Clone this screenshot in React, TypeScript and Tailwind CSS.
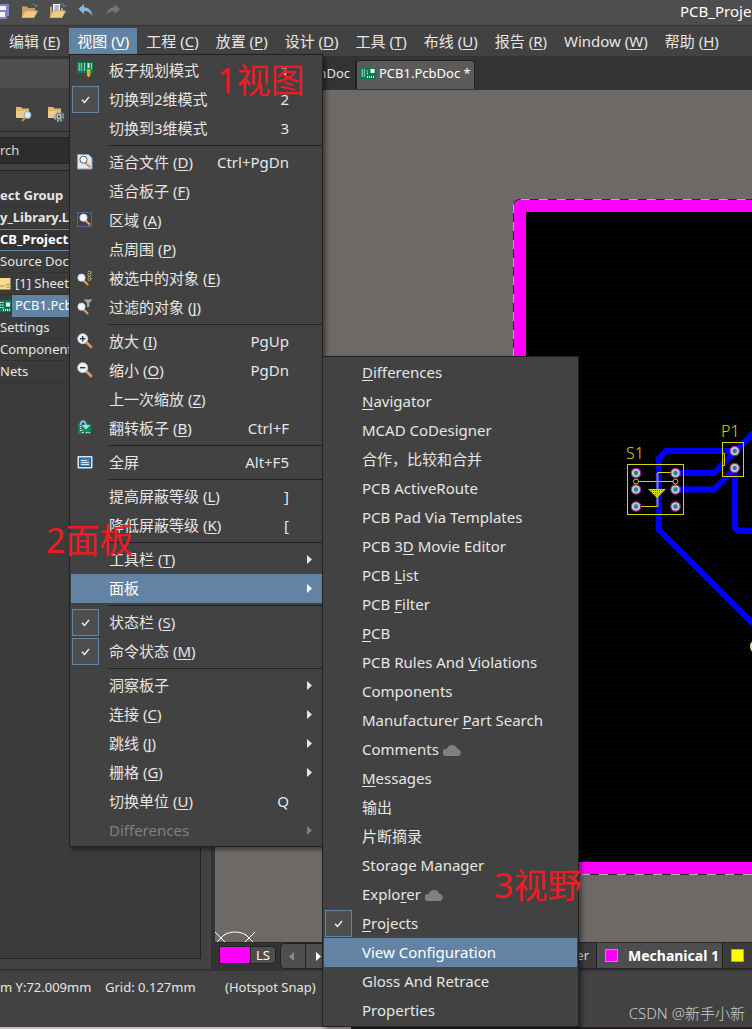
import { Fragment, type ReactNode } from 'react';

interface Entry {
  label: string;
  hotkey?: string;
  shortcut?: string;
  icon?: ReactNode;
  checked?: boolean;
  active?: boolean;
  disabled?: boolean;
  submenu?: boolean;
  cloud?: boolean;
}

function Lens({ sign }: { sign?: 'plus' | 'minus' }) {
  return (
    <svg width="16" height="16" viewBox="0 0 16 16">
      <path d="M9.500 9.500l4.500 4.500" stroke="#c98a45" strokeWidth="3" strokeLinecap="round" />
      <path d="M9.500 9l4.500 4.500" stroke="#f2c98c" strokeWidth="1" />
      <circle cx="5.700" cy="5.700" r="5" fill="#e9f3fb" stroke="#b4c8dc" />
      {sign && <path d="M3 5.700h5.400" stroke="#34383c" strokeWidth="1.400" />}
      {sign === 'plus' && <path d="M5.700 3v5.400" stroke="#34383c" strokeWidth="1.400" />}
    </svg>
  );
}

function SmallLens({ kind }: { kind: 'page' | 'area' | 'selected' | 'filter' }) {
  const low = kind === 'selected' || kind === 'filter';
  return (
    <svg width="16" height="16" viewBox="0 0 16 16">
      {kind === 'page' && <path d="M.5.5h11l3.500 3.500v11H.5z" fill="#dfe7f5" stroke="#8d9fc4" />}
      {kind === 'area' && (
        <rect x=".5" y=".5" width="14" height="14" fill="none" stroke="#6670c0" strokeDasharray="2 1" />
      )}
      {kind === 'selected' && (
        <g fill="none" stroke="#e8e27a">
          <circle cx="12.500" cy="2.500" r="1.500" strokeDasharray="1.500 .8" />
          <circle cx="12.500" cy="9" r="1.500" strokeDasharray="1.500 .8" />
          <path d="M10.500 5l2 1.500L14.500 5" />
        </g>
      )}
      {kind === 'filter' && <path d="M6.500.5h9l-3.300 3.500v4h-2.200v-4z" fill="#a9a9a9" />}
      <g transform={low ? 'translate(-2 2)' : undefined}>
        <path d="M8.500 8.500l4 4" stroke="#c98a45" strokeWidth="2.400" strokeLinecap="round" />
        <path d="M8.800 8.300l3.700 3.700" stroke="#f2c98c" />
        <circle cx="6.500" cy="5.700" r="3.600" fill="#f1f7fc" stroke={kind === 'page' ? '#55606c' : '#c6d6e4'} />
      </g>
    </svg>
  );
}

function BoardIcon({ pencil, flip }: { pencil?: boolean; flip?: boolean }) {
  return (
    <svg width="16" height="16" viewBox="0 0 16 16">
      {flip ? (
        <>
          <rect x="1" y="4" width="13" height="10" fill="#0b8a57" />
          <path d="M3 6.500h2M3 8.500h2M3 10.500h3M9 12.500h4M5 12.500h2" stroke="#e9f5ee" strokeDasharray="1 .5" />
          <path d="M3.500 5C3.500.5 8.500-.5 8.800 5" fill="none" stroke="#8db9e8" strokeWidth="2" />
          <path d="M4.800 5h8.400L9 9.800z" fill="#b5d4f5" />
        </>
      ) : (
        <g transform={pencil ? 'translate(0 -2)' : undefined}>
          <rect x="0" y="2" width="16" height="11" fill="#0b7a50" />
          <path d="M1.500 4h4M1.500 6h4M1.500 8h4M1.500 10h4" stroke="#e9f5ee" strokeDasharray="1.500 .7" />
          {pencil ? (
            <>
              <path d="M7.500 3v8M14.500 3v6" stroke="#9fdcc0" />
              <path d="M11.500 3v5" stroke="#d9f3e6" strokeWidth="2" />
              <path d="M10 9h3.500v6l-1.800 2.500-1.700-2z" fill="#e3a92c" />
            </>
          ) : (
            <>
              <rect x="10.500" y="3" width="4" height="4" fill="#f4fbf7" />
              <path d="M7.500 4v5" stroke="#5cc795" />
              <path d="M7 11h8" stroke="#e9f5ee" strokeWidth="2" strokeDasharray="1 1" />
            </>
          )}
        </g>
      )}
    </svg>
  );
}

function ScreenIcon() {
  return (
    <svg width="16" height="16" viewBox="0 0 16 16">
      <rect x=".5" y="2" width="15" height="12.500" rx="1" fill="#dfe6ee" />
      <rect x="2.500" y="4" width="11" height="8.500" fill="#3583c8" stroke="#1c5a94" />
      <path d="M4 6.500h6M4 8.500h8M4 10.500h8" stroke="#d6e9fa" />
    </svg>
  );
}

function FolderIcon({ badge }: { badge?: 'lens' | 'gear' | 'open' | 'page' }) {
  const open = badge === 'open' || badge === 'page';
  return (
    <svg width="18" height="18" viewBox="0 0 18 18">
      {open ? (
        <>
          <path d="M1 15V4.500h5l1 1.500h7V9" fill="#c99f60" />
          {badge === 'page' && (
            <g>
              <path d="M3.500 1.500h8V11h-8z" fill="#f4f6fa" stroke="#44546c" />
              <path d="M5.500 4h4.500M5.500 6h4.500M5.500 8h4" stroke="#5f7592" />
            </g>
          )}
          <path d="M1 15.500L4 9h12.500l-3.500 6.500z" fill="#f1ca85" stroke="#d9ad68" />
          <path d="M11 3c1.500-2 3.500-1.500 4 1M13.500 3.500l1.500 1.500 1.500-2" fill="none" stroke="#5f86b0" />
        </>
      ) : (
        <>
          <path d="M1 14V3h5l1.500 1.500H14V14z" fill="#e3b877" />
          <path d="M1 7h13v7H1z" fill="#f0ca8d" />
        </>
      )}
      {badge === 'lens' && (
        <g>
          <path d="M10 14l-3 3" stroke="#c98a45" strokeWidth="2" />
          <circle cx="12.500" cy="11" r="3.500" fill="#d5e9f5" stroke="#8fa9ba" />
        </g>
      )}
      {badge === 'gear' && (
        <g fill="none" stroke="#a9afb3">
          <circle cx="12" cy="12.500" r="4.500" strokeWidth="1.600" strokeDasharray="2 1.500" />
          <circle cx="12" cy="12.500" r="3" fill="#d9dcde" stroke="#7d8488" strokeWidth="1.600" />
          <circle cx="12" cy="12.500" r="1.200" fill="#444" stroke="none" />
        </g>
      )}
    </svg>
  );
}

function CurvedArrow({ redo }: { redo?: boolean }) {
  return (
    <svg width="16" height="16" viewBox="0 0 16 16">
      <path
        d={redo ? 'M15 6L9.500 1v3.300C5 4.500 2 7 1.500 12 3.500 9 6 8 9.500 8v3.200z' : 'M.5 6L6 1v3.300c5 .2 8 3.200 8.500 9.200C12.500 9.500 10 8 6 8v3.200z'}
        fill={redo ? '#747474' : '#8ab4e6'}
      />
    </svg>
  );
}

function Cloud() {
  return (
    <svg width="18" height="12" viewBox="0 0 18 12" className="ml-1">
      <path d="M3 12A3.200 3.200 0 0 1 3 5Q4 5 4.300 4.300A5.200 5.200 0 0 1 14 4.300Q14.300 5 15 5A3.600 3.600 0 0 1 15 12z" fill="#808080" />
    </svg>
  );
}

const MENU_BAR: [string, string][] = [
  ['编辑', 'E'],
  ['视图', 'V'],
  ['工程', 'C'],
  ['放置', 'P'],
  ['设计', 'D'],
  ['工具', 'T'],
  ['布线', 'U'],
  ['报告', 'R'],
  ['Window', 'W'],
  ['帮助', 'H'],
];

// each inner list is one block between separators
const VIEW_MENU: Entry[][] = [
  [
    { label: '板子规划模式', shortcut: '1', icon: <BoardIcon pencil /> },
    { label: '切换到2维模式', shortcut: '2', checked: true },
    { label: '切换到3维模式', shortcut: '3' },
  ],
  [
    { label: '适合文件', hotkey: 'D', shortcut: 'Ctrl+PgDn', icon: <SmallLens kind="page" /> },
    { label: '适合板子', hotkey: 'F' },
    { label: '区域', hotkey: 'A', icon: <SmallLens kind="area" /> },
    { label: '点周围', hotkey: 'P' },
    { label: '被选中的对象', hotkey: 'E', icon: <SmallLens kind="selected" /> },
    { label: '过滤的对象', hotkey: 'J', icon: <SmallLens kind="filter" /> },
  ],
  [
    { label: '放大', hotkey: 'I', shortcut: 'PgUp', icon: <Lens sign="plus" /> },
    { label: '缩小', hotkey: 'O', shortcut: 'PgDn', icon: <Lens sign="minus" /> },
    { label: '上一次缩放', hotkey: 'Z' },
    { label: '翻转板子', hotkey: 'B', shortcut: 'Ctrl+F', icon: <BoardIcon flip /> },
  ],
  [{ label: '全屏', shortcut: 'Alt+F5', icon: <ScreenIcon /> }],
  [
    { label: '提高屏蔽等级', hotkey: 'L', shortcut: ']' },
    { label: '降低屏蔽等级', hotkey: 'K', shortcut: '[' },
  ],
  [
    { label: '工具栏', hotkey: 'T', submenu: true },
    { label: '面板', submenu: true, active: true },
  ],
  [
    { label: '状态栏', hotkey: 'S', checked: true },
    { label: '命令状态', hotkey: 'M', checked: true },
  ],
  [
    { label: '洞察板子', submenu: true },
    { label: '连接', hotkey: 'C', submenu: true },
    { label: '跳线', hotkey: 'J', submenu: true },
    { label: '栅格', hotkey: 'G', submenu: true },
    { label: '切换单位', hotkey: 'U', shortcut: 'Q' },
    { label: 'Differences', submenu: true, disabled: true },
  ],
];

// an underscore stands before the underlined letter
const PANEL_MENU: Entry[][] = [
  [
    { label: '_Differences' },
    { label: '_Navigator' },
    { label: 'MCAD CoDesigner' },
    { label: '合作，比较和合并' },
    { label: 'PCB ActiveRoute' },
    { label: 'PCB Pad Via Templates' },
    { label: 'PCB 3_D Movie Editor' },
    { label: 'PCB _List' },
    { label: 'PCB _Filter' },
    { label: '_PCB' },
    { label: 'PCB Rules And _Violations' },
    { label: 'Components' },
    { label: 'Manufacturer _Part Search' },
    { label: 'Comments', cloud: true },
    { label: '_Messages' },
    { label: '输出' },
    { label: '片断摘录' },
    { label: 'Storage Manager' },
    { label: 'Explo_rer', cloud: true },
    { label: '_Projects', checked: true },
    { label: 'View Configuration', active: true },
    { label: 'Gloss And Retrace' },
    { label: 'Properties' },
  ],
];

function Key({ children }: { children: ReactNode }) {
  return <u className="decoration-1 underline-offset-2">{children}</u>;
}

function Label({ text, hotkey }: { text: string; hotkey?: string }) {
  const at = text.indexOf('_');
  if (at >= 0) {
    return (
      <span>
        {text.slice(0, at)}
        <Key>{text[at + 1]}</Key>
        {text.slice(at + 2)}
      </span>
    );
  }
  return (
    <span>
      {text}
      {hotkey && <> (<Key>{hotkey}</Key>)</>}
    </span>
  );
}

function MenuRow({ entry }: { entry: Entry }) {
  const body = (
    <>
      <span className="mr-[9px] grid w-[29px] shrink-0 place-items-center">
        {entry.checked ? (
          <>
            <input
              type="checkbox"
              defaultChecked
              className="col-start-1 row-start-1 size-[27px] appearance-none border border-[#6283a3] bg-[#4e4e4e]"
            />
            <svg width="9" height="8" viewBox="0 0 9 8" className="pointer-events-none col-start-1 row-start-1">
              <path d="M1 3.800l2.500 2.700L8 1" fill="none" stroke="#f2f2f2" strokeWidth="1.400" />
            </svg>
          </>
        ) : (
          <span className="pr-[2px] pb-[2px]">{entry.icon}</span>
        )}
      </span>
      <Label text={entry.label} hotkey={entry.hotkey} />
      {entry.cloud && <Cloud />}
      <span className="ml-auto">{entry.shortcut}</span>
      <span className="flex w-[33px] shrink-0 justify-end pr-[10px]">
        {entry.submenu && (
          <svg width="5" height="9" viewBox="0 0 5 9">
            <path d="M0 0l5 4.500L0 9z" fill="currentColor" />
          </svg>
        )}
      </span>
    </>
  );
  if (entry.checked) {
    return <label className="flex h-[29px] w-full items-center">{body}</label>;
  }
  return (
    <button
      type="button"
      disabled={entry.disabled}
      className={`flex h-[29px] w-full items-center text-left ${entry.active ? 'bg-[#6283a3] text-white' : ''} ${
        entry.disabled ? 'text-[#808080]' : ''
      }`}
    >
      {body}
    </button>
  );
}

function Menu({ groups, className }: { groups: Entry[][]; className: string }) {
  return (
    <div
      className={`absolute border border-[#222222] bg-[#424242] py-px pl-px text-[15px] whitespace-nowrap shadow-[3px_3px_4px_rgba(0,0,0,0.4)] ${className}`}
    >
      {groups.map((group, i) => (
        <Fragment key={i}>
          {i > 0 && <hr className="my-[2px] ml-[38px] border-[#222222]" />}
          {group.map((entry) => (
            <MenuRow key={entry.label} entry={entry} />
          ))}
        </Fragment>
      ))}
    </div>
  );
}

function ProjectsPanel() {
  const row = 'flex h-[22px] w-full items-center border-b border-[#333333] text-left';
  return (
    <aside className="flex w-[211px] shrink-0 flex-col border-t-[3px] border-[#333333] bg-[#424242] text-[13px]">
      <div className="h-[29px] bg-[#4e4e4e]" />
      <div className="flex h-[43px] items-center gap-[14px] pt-[7px] pl-[15px]">
        <button type="button" aria-label="Find in project"><FolderIcon badge="lens" /></button>
        <button type="button" aria-label="Project options"><FolderIcon badge="gear" /></button>
      </div>
      <div className="border-t border-[#262626] pt-[5px]">
        <input
          type="text"
          aria-label="Search"
          defaultValue="rch"
          className="block h-[27px] w-full border-y border-[#262626] bg-[#2d2d2d] pb-px text-[#d8d8d8] outline-none"
        />
      </div>
      <div className="mt-[6px] mr-[10px] mb-[10px] flex-1 overflow-hidden border-t border-r border-b border-[#222222] bg-[#3b3b3b] pt-[14px] whitespace-nowrap">
        <button type="button" className={`${row} font-bold`}>ect Group</button>
        <button type="button" className={`${row} font-bold`}>y_Library.L</button>
        <button type="button" className="flex h-[22px] w-full items-center border-y border-[#6283a3] bg-[#333333] text-left font-bold text-white">
          CB_Project.
        </button>
        <button type="button" className={row}>Source Doc</button>
        <button type="button" className={row}>
          <svg width="11" height="12" viewBox="0 0 11 12" className="mr-[4px]">
            <path d="M0 0h10.500v11.500H0z" fill="#f4dc8e" />
            <path d="M0 8h5M6 6.500h4M6 9h4" stroke="#a98f4a" />
          </svg>
          [1] Sheet
        </button>
        <button type="button" className="flex h-[22px] w-full items-center text-left">
          <svg width="12" height="12" viewBox="0 0 12 12">
            <path d="M0 0h11v12H0z" fill="#0b7a50" />
            <path d="M0 2.500h4M0 5h4M0 7.500h4" stroke="#e9f5ee" strokeDasharray="1.500 .7" />
            <path d="M6 2.500h4v4H6z" fill="#f4fbf7" />
            <path d="M3 10h7" stroke="#e9f5ee" strokeWidth="2" strokeDasharray="1 1" />
          </svg>
          <span className="flex h-full flex-1 items-center bg-[#6283a3] pl-[3px] text-white">PCB1.Pcb</span>
        </button>
        <button type="button" className={row}>Settings</button>
        <button type="button" className={row}>Component</button>
        <button type="button" className={row}>Nets</button>
      </div>
    </aside>
  );
}

const PADS = [
  [636, 473],
  [636, 489.5],
  [636, 506.5],
  [675.5, 473],
  [675.5, 489.5],
  [675.5, 506.5],
  [734.7, 451],
  [734.7, 468],
];

function BoardView() {
  return (
    <svg className="absolute inset-0 h-full w-full" aria-label="PCB layout">
      <defs>
        <pattern id="grid" width="4" height="4" patternUnits="userSpaceOnUse">
          <rect width="4" height="4" fill="#000000" />
          <rect width="1" height="1" fill="#121212" />
        </pattern>
      </defs>
      {/* shapes are in window coordinates */}
      <g transform="translate(-215 -90)" fill="none">
        <path d="M1400 874H514V206q0-6 6-6h880z" fill="#ff00ff" />
        <rect x="526" y="212" width="900" height="650" fill="url(#grid)" />
        <path d="M1400 874.500H513.500V206q0-6.500 6.500-6.500h880" stroke="#3c1c3c" />
        <path d="M1400 874.500H513.500V206q0-6.500 6.500-6.500h880" stroke="#b0aeac" strokeDasharray="9 9" />

        <g stroke="#0000ff" strokeWidth="6" strokeLinejoin="round">
          <path d="M734.700 451H666l-7.300 7.500V529.500L1000 870" />
          <path d="M675.500 473H714L800 386" />
          <path d="M675.500 489.500H714l20.700-21v58.500l4 3.700H1400" />
        </g>

        <g stroke="#d6d600">
          <rect x="627.500" y="464.500" width="56" height="50" />
          <rect x="722.500" y="442.500" width="21" height="34" />
          <path d="M722.500 453.500h2v12h-2" />
          <path d="M636 481.500h39.500M657.500 472.500h14M641 506.500h16" />
        </g>
        <circle cx="758" cy="646.500" r="7" stroke="#e6e68c" strokeWidth="2" />
        <path d="M657.500 473v34" stroke="#8c8c78" strokeWidth="2" />
        <path d="M648 489h18l-9 9z" fill="#d6d600" />
        <path d="M651 490.500h12M653 492.500h8M655 494.500h4" stroke="#6a6a10" strokeDasharray="1 1" />

        {PADS.map(([x, y]) => (
          <g key={`${x}-${y}`}>
            <circle cx={x} cy={y} r="4.700" fill="#c9c9c9" stroke="#a3219f" strokeWidth="1.200" />
            <circle cx={x} cy={y} r="2.200" fill="#009494" />
          </g>
        ))}
        <circle cx="636" cy="481.500" r="2.500" fill="#000000" stroke="#d6d600" />
        <circle cx="675.500" cy="481.500" r="2.500" fill="#000000" stroke="#d6d600" />

        <g fill="#d6d600" className="text-[16px] font-light">
          <text x="626" y="459">S1</text>
          <text x="721" y="437">P1</text>
        </g>

        <g stroke="#ffffff">
          <path d="M215 932l10 10M217 942l8-8M245 934l8 8M245 942l10-10" />
          <path d="M221 938c6-8 22-8 28 0" />
        </g>
      </g>
    </svg>
  );
}

function LayerBar() {
  return (
    <div className="flex h-[27px] shrink-0 items-stretch border-t border-[#262626] bg-[#333333] pl-[4px] text-[14px] font-bold text-white">
      <div className="mt-[3px] flex h-[18px] items-stretch rounded-r border border-[#222222]">
        <span className="w-[30px] bg-[#ff00ff]" />
        <button type="button" className="w-[25px] rounded-r border-l border-[#222222] bg-[#4e4e4e] text-[13px] leading-4 font-normal">
          LS
        </button>
      </div>
      <div className="ml-[4px] flex w-[61px] rounded-l border border-[#222222] bg-[#4e4e4e]">
        <button type="button" aria-label="Previous layers" className="flex w-[25px] items-center justify-center border-r border-[#222222] pr-[4px]">
          <svg width="5" height="9" viewBox="0 0 5 9"><path d="M5 0L0 4.500 5 9z" fill="#8c8c8c" /></svg>
        </button>
        <button type="button" aria-label="Next layers" className="flex w-[24px] items-center justify-center">
          <svg width="5" height="9" viewBox="0 0 5 9"><path d="M0 0l5 4.500L0 9z" fill="#ffffff" /></svg>
        </button>
      </div>
      <button type="button" className="w-[256px] shrink-0 border-r border-b border-[#222222] bg-[#3b3b3b] pr-[7px] text-right text-[13px] font-normal text-[#d8d8d8]">
        er
      </button>
      <button type="button" className="flex w-[125px] shrink-0 items-center border-b border-[#222222] bg-[#4e4e4e] pl-[8px] whitespace-nowrap">
        <span className="mr-[10px] size-[13px] border border-[#a0a0a0] bg-[#ff00ff]" />
        Mechanical 1
      </button>
      <button type="button" aria-label="Top Overlay" className="flex flex-1 items-center border-b border-l border-[#222222] bg-[#3b3b3b] pl-[8px]">
        <span className="size-[13px] border border-[#a0a0a0] bg-[#ffff00]" />
      </button>
    </div>
  );
}

export default function App() {
  return (
    <div className="relative flex min-h-screen w-full flex-col overflow-hidden bg-[#333333] font-['Noto_Sans','Noto_Sans_CJK_SC',sans-serif] text-[15px] text-[#e6e6e6]">
      {/* Title bar */}
      <header className="flex h-[26px] shrink-0 items-center border-b border-[#333333] bg-[#4e4e4e] pb-[2px] text-white">
        <div className="flex items-center pb-[2px]">
          <button type="button" aria-label="Save" className="mr-[12px]">
            <svg width="9" height="16" viewBox="0 0 9 16">
              <path d="M0 1h9v12H7v3H0z" fill="#8083c4" />
              <path d="M0 3h6v4H0zM0 9h5v5H0z" fill="#f2f3fb" />
            </svg>
          </button>
          <button type="button" aria-label="Open" className="mr-[10px]"><FolderIcon badge="open" /></button>
          <button type="button" aria-label="Open document" className="mr-[11px]"><FolderIcon badge="page" /></button>
          <button type="button" aria-label="Undo" className="mr-[11px]"><CurvedArrow /></button>
          <button type="button" aria-label="Redo"><CurvedArrow redo /></button>
        </div>
        <h1 className="ml-auto w-[72px] whitespace-nowrap">PCB_Proje</h1>
      </header>

      {/* Menu bar */}
      <nav className="flex h-[30px] shrink-0 items-center gap-px bg-[#424242] pl-px">
        {MENU_BAR.map(([name, key]) => (
          <button
            key={name}
            type="button"
            className={`h-[26px] px-[8px] whitespace-nowrap ${name === '视图' ? 'bg-[#6283a3] text-white' : ''}`}
          >
            <Label text={name} hotkey={key} />
          </button>
        ))}
      </nav>

      <main className="flex flex-1">
        <ProjectsPanel />
        <section className="ml-[4px] flex min-w-0 flex-1 flex-col">
          <div className="flex h-[34px] shrink-0 items-end text-[13px]">
            <button type="button" className="mb-px h-[29px] w-[141px] border-r border-[#222222] pr-[5px] pb-px text-right">
              nDoc
            </button>
            <button
              type="button"
              className="mb-px flex h-[29px] items-center gap-[3px] rounded-t border border-b-0 border-[#222222] bg-[#5a5a5a] px-[3px] pb-[2px] whitespace-nowrap text-white"
            >
              <BoardIcon />
              PCB1.PcbDoc *
            </button>
          </div>
          <div className="relative flex-1 overflow-hidden bg-[#6d6966]">
            <BoardView />
          </div>
          <LayerBar />
        </section>
      </main>

      {/* Status bar */}
      <footer className="mt-[2px] shrink-0 bg-[#424242] text-[13px]">
        <div className="flex h-[56px] items-start pt-[7px] whitespace-nowrap">
          <span className="w-[105px]">m Y:72.009mm</span>
          <span className="w-[120px]">Grid: 0.127mm</span>
          <span>(Hotspot Snap)</span>
          <span className="mt-[24px] mr-[7px] ml-auto text-[15px] font-light text-[#cccccc]">CSDN @新手小新</span>
        </div>
        <div className="h-[2px] bg-[#231f20]">
          <div className="h-full w-[351px] bg-[#c4bcbc]" />
        </div>
      </footer>

      <Menu groups={VIEW_MENU} className="top-[54px] left-[69px] w-[254px]" />
      <Menu groups={PANEL_MENU} className="top-[356px] left-[322px] w-[257px] pr-px" />

      {/* Step notes over the menus */}
      <div className="pointer-events-none text-[34px] leading-10 whitespace-nowrap text-[#ed1c24]">
        <p className="absolute top-[60px] left-[217px]">1视图</p>
        <p className="absolute top-[520px] left-[46px]">2面板</p>
        <p className="absolute top-[865px] left-[494px]">3视野</p>
      </div>
    </div>
  );
}
